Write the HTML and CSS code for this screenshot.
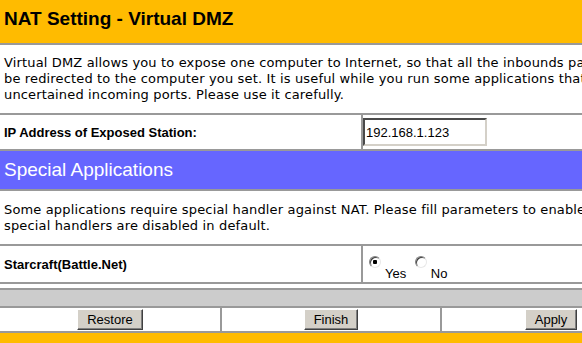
FILE: index.html
```html
<!DOCTYPE html>
<html lang="en">
<head>
    <meta charset="UTF-8">
    <title>NAT Setting - Virtual DMZ</title>
    <link rel="stylesheet" href="styles.css">
</head>
<body>
    <div class="page">
        <!-- page title -->
        <div class="title">NAT Setting - Virtual DMZ</div>

        <div class="desc desc-dmz">
            Virtual DMZ allows you to expose one computer to Internet, so that all the inbounds packets will<br>
            be redirected to the computer you set. It is useful while you run some applications that use<br>
            uncertained incoming ports. Please use it carefully.
        </div>

        <div class="row row-ip">
            <div class="label">IP Address of Exposed Station:</div>
            <div class="field field-ip">
                <input class="text-input" type="text" name="dmz_ip" value="192.168.1.123">
            </div>
        </div>

        <!-- special applications -->
        <div class="section">Special Applications</div>

        <div class="desc desc-apps">
            Some applications require special handler against NAT. Please fill parameters to enable them. The<br>
            special handlers are disabled in default.
        </div>

        <div class="row row-app">
            <div class="label">Starcraft(Battle.Net)</div>
            <div class="field field-radios">
                <label class="choice"><input class="radio" type="radio" name="starcraft" checked>Yes</label>
                <label class="choice"><input class="radio" type="radio" name="starcraft">No</label>
            </div>
        </div>

        <div class="spacer"></div>
        <div class="bar"></div>

        <div class="buttons">
            <div class="cell"><button class="btn" type="button">Restore</button></div>
            <div class="cell"><button class="btn" type="button">Finish</button></div>
            <div class="cell"><button class="btn" type="button">Apply</button></div>
        </div>

        <div class="footer"></div>
    </div>
</body>
</html>
```

FILE: styles.css
```css
/* Base */
body {
    margin: 0;
    padding: 0;
    background: #fff;
    color: #000;
    font-family: "Liberation Sans", Arial, sans-serif;
    overflow: hidden;
}

.page {
    width: 660px;
}

/* title bar */
.title {
    height: 43px;
    line-height: 37px;
    padding-left: 4px;
    background: #ffbb00;
    border-bottom: 2px solid #999;
    font-size: 19px;
    font-weight: bold;
}

/* description blocks */
.desc {
    padding-left: 4px;
    font-family: "DejaVu Sans", Verdana, sans-serif;
    font-size: 13px;
    line-height: 16px;
    letter-spacing: 0.15px;
    white-space: nowrap;
    overflow: hidden;
    border-bottom: 2px solid #999;
}

.desc-dmz {
    height: 58px;
    padding-top: 10px;
}

.desc-apps {
    height: 42px;
    padding-top: 11px;
}

/* label / field rows */
.row {
    display: flex;
    border-bottom: 2px solid #999;
}

.row-ip {
    height: 34px;
}

.row-app {
    height: 36px;
}

.label {
    width: 357px;
    padding-left: 4px;
    display: flex;
    align-items: center;
    font-size: 13px;
    font-weight: bold;
}

.field {
    flex: 1;
    border-left: 2px solid #999;
}

.field-ip {
    display: flex;
    align-items: center;
}

.text-input {
    width: 124px;
    height: 28px;
    box-sizing: border-box;
    margin: 0;
    padding: 0 1px;
    border: 2px solid;
    border-color: #4a4a4a #d4d0c8 #d4d0c8 #4a4a4a;
    font-family: "Liberation Sans", Arial, sans-serif;
    font-size: 13px;
    color: #000;
    outline: none;
}

.field-radios {
    padding: 10px 0 0 6px;
    font-size: 13px;
}

.choice {
    margin-right: 5px;
}

.radio {
    appearance: none;
    -webkit-appearance: none;
    width: 12px;
    height: 12px;
    margin: 0 4px 0 0;
    vertical-align: 10px;
    border: 1px solid;
    border-color: #808080 #e8e8e8 #e8e8e8 #808080;
    border-radius: 50%;
    background: #fff;
    box-shadow: inset 1px 1px 0 #404040;
}

.radio:checked {
    background: radial-gradient(circle, #000 0, #000 2px, #fff 2.5px);
}

/* section header */
.section {
    height: 38px;
    line-height: 38px;
    padding-left: 4px;
    background: #6666ff;
    color: #fff;
    font-size: 19px;
    border-bottom: 2px solid #999;
}

.spacer {
    height: 4px;
}

.bar {
    height: 16px;
    background: #ccc;
    border-top: 2px solid #999;
    border-bottom: 2px solid #999;
}

/* buttons */
.buttons {
    display: grid;
    grid-template-columns: 220px 220px 220px;
    height: 23px;
    border-bottom: 2px solid #999;
}

.cell {
    display: flex;
    align-items: center;
    justify-content: center;
}

.cell + .cell {
    border-left: 2px solid #999;
}

.btn {
    height: 21px;
    padding: 0 9px;
    background: #d4d0c8;
    border: 1px solid;
    border-color: #fff #404040 #404040 #fff;
    box-shadow: inset -1px -1px 0 #808080;
    font-family: "Liberation Sans", Arial, sans-serif;
    font-size: 13px;
    color: #000;
}

.footer {
    height: 10px;
    background: #ffbb00;
}
```
